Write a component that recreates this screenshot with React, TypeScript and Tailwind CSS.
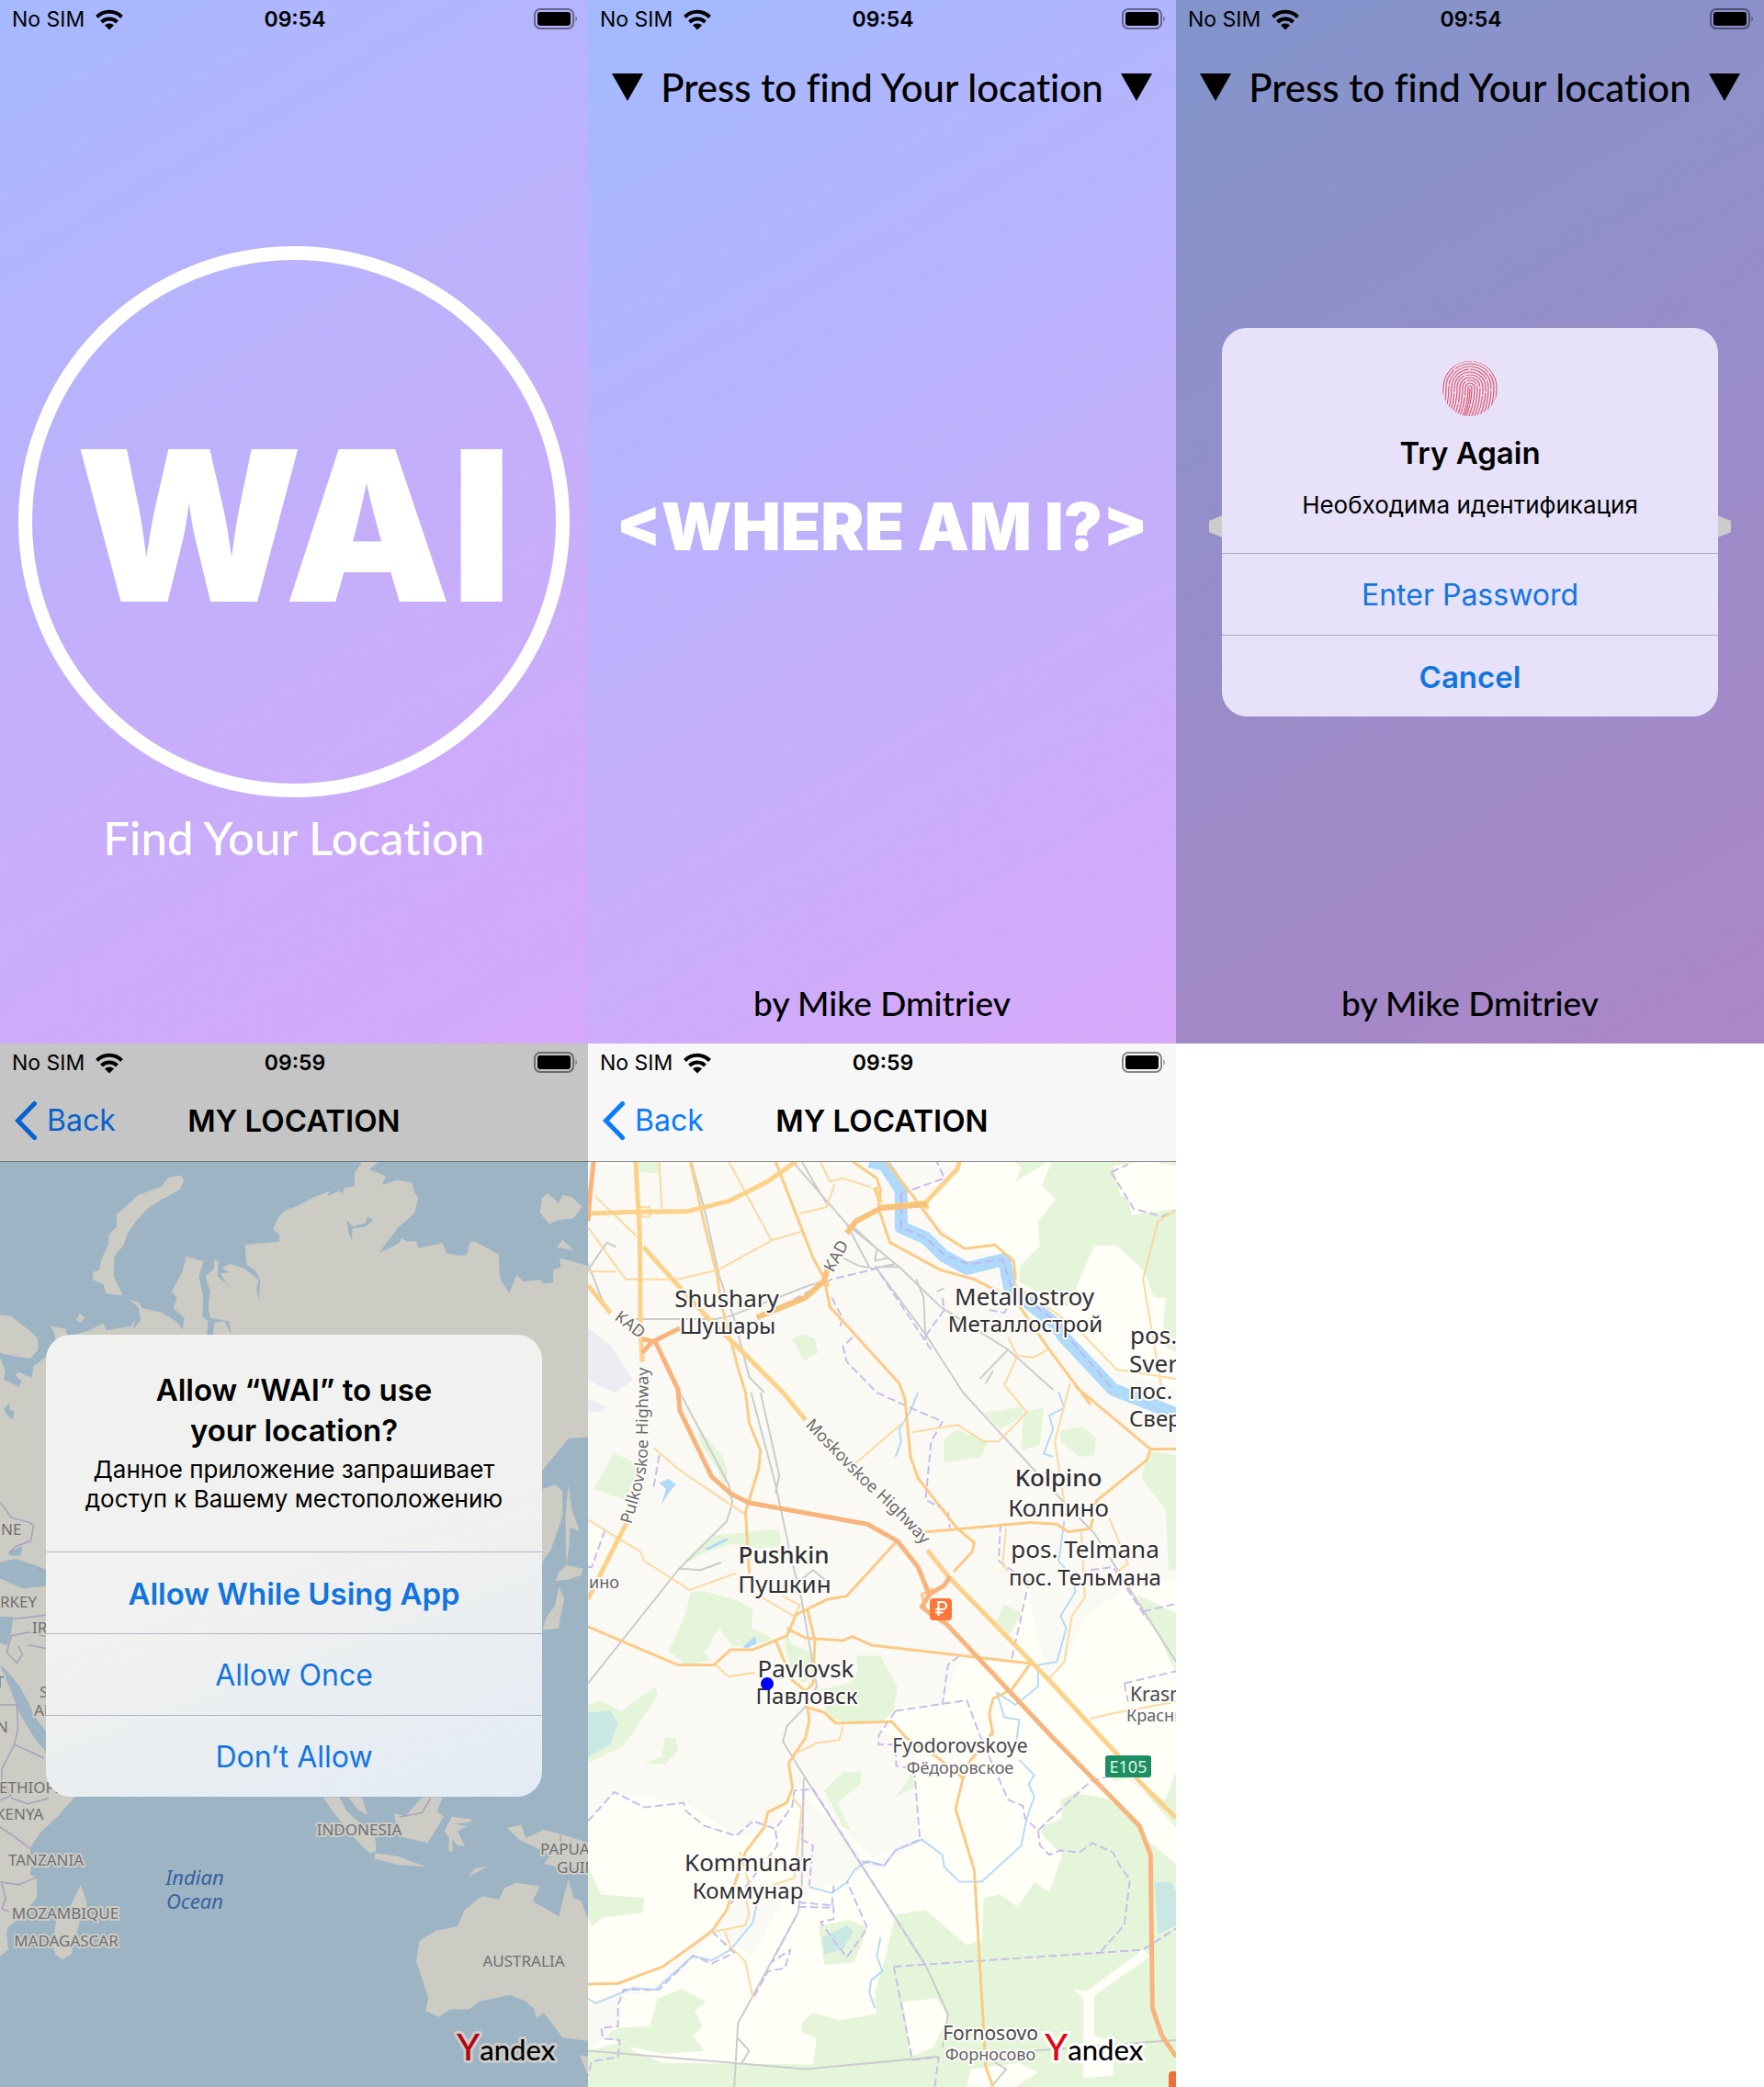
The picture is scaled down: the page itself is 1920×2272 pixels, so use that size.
import React from "react";

/* ---------- Shared phone chrome ---------- */

function WifiIcon() {
  return (
    <svg viewBox="0 0 30 23" className="h-[23px] w-[30px]" aria-label="Wi-Fi">
      <g fill="none" stroke="#000" strokeWidth="4">
        <path d="M1.5 8.5a19 19 0 0 1 27 0" />
        <path d="M6.500 14a12 12 0 0 1 17 0" />
      </g>
      <path d="M15 22.500l-5-5a7.200 7.200 0 0 1 10 0z" />
    </svg>
  );
}

function BatteryIcon() {
  return (
    <svg viewBox="0 0 48 24" className="h-6 w-12" aria-label="Battery full">
      <rect x="1" y="1" width="42" height="21" rx="6" fill="none" stroke="#000" strokeOpacity="0.45" strokeWidth="2" />
      <rect x="4" y="4" width="36" height="15" rx="3" />
      <path d="M45.500 8q2.500 3.500 0 7z" fillOpacity="0.5" />
    </svg>
  );
}

function StatusBar({ time }: { time: string }) {
  return (
    <div className="grid h-10 grid-cols-3 items-center pt-0.5 pr-[11px] pl-[13px] text-[23px] leading-6 text-black">
      <div className="flex items-center gap-3">
        <span>No SIM</span>
        <WifiIcon />
      </div>
      <time className="text-center font-semibold">{time}</time>
      <div className="flex justify-end">
        <BatteryIcon />
      </div>
    </div>
  );
}

function NavBar({ time }: { time: string }) {
  return (
    <header className="border-b border-[#8e9090] bg-[#f7f7f7]">
      <StatusBar time={time} />
      <div className="grid h-[88px] grid-cols-[1fr_auto_1fr] items-center px-[15px]">
        <button type="button" className="flex items-center gap-[10px] justify-self-start text-[32px] leading-10 text-[#0a7aff]">
          <svg viewBox="0 0 26 44" className="h-[44px] w-[26px]" fill="none" stroke="currentColor" strokeWidth="5" strokeLinecap="round" strokeLinejoin="miter">
            <path d="M22.500 3.500 4.500 22l18 18.500" />
          </svg>
          Back
        </button>
        <h2 className="text-[33px] leading-10 font-semibold text-black">MY LOCATION</h2>
        <span />
      </div>
    </header>
  );
}

function Phone({ className, label, children }: { className: string; label: string; children: React.ReactNode }) {
  return (
    <section aria-label={label} className={`relative flex aspect-[80/142] flex-col overflow-hidden ${className}`}>
      {children}
    </section>
  );
}

/* ---------- Alerts ---------- */

function Fingerprint() {
  const rings = [
    { r: 2, dash: "60 1" },
    { r: 5, dash: "26 1.5 60" },
    { r: 8, dash: "44 1.5 12 1.500 60" },
    { r: 11, dash: "18 1.5 50 1.500 60" },
    { r: 14, dash: "52 1.5 34 1.500 60" },
    { r: 17, dash: "30 1.5 62 1.500 60" },
    { r: 20, dash: "66 1.5 22 1.500 60" },
    { r: 23, dash: "38 1.5 70 1.500 60" },
    { r: 26, dash: "58 1.5 40 1.500 60" },
    { r: 29, dash: "84 1.5 60" },
  ];
  return (
    <svg viewBox="0 0 60 60" className="size-[60px]" aria-hidden="true">
      <clipPath id="finger-clip">
        <circle cx="30" cy="30" r="30" />
      </clipPath>
      <g clipPath="url(#finger-clip)" fill="none" stroke="#e0566a" strokeWidth="1.200">
        {rings.map(({ r, dash }) => (
          <path key={r} strokeDasharray={dash} d={`M${22 - r} 64Q${30 - r} 48 ${30 - r} 29A${r} ${r} 0 0 1 ${30 + r} 29Q${30 + r} 48 ${22 + r} 64`} />
        ))}
        <path d="M30 30Q30 48 22 64" />
      </g>
    </svg>
  );
}

function AlertButton({ children, bold = false }: { children: React.ReactNode; bold?: boolean }) {
  return (
    <button
      type="button"
      className={`h-[89px] w-full border-t border-[#5a5a8266] pt-0.5 leading-10 text-[#1275df] ${bold ? "text-[33px] font-semibold" : "text-[32px] font-normal"}`}
    >
      {children}
    </button>
  );
}

function Alert({ className, label, children }: { className: string; label: string; children: React.ReactNode }) {
  return (
    <div className="absolute inset-0 flex items-center bg-black/20 px-[50px]">
      <div role="alertdialog" aria-label={label} className={`w-full overflow-hidden rounded-[27px] text-center text-black ${className}`}>
        {children}
      </div>
    </div>
  );
}

/* ---------- Start screens ---------- */

function SplashScreen() {
  return (
    <Phone label="Splash" className="bg-linear-150 from-[#a6b9ff] via-[#c3affb] to-[#d5a8fa]">
      <StatusBar time="09:54" />
      <div className="flex flex-1 flex-col items-center px-5 pt-[228px]">
        <h1 className="flex aspect-square w-full items-center justify-center rounded-full border-[15px] border-white pt-2 text-[228px] leading-none font-black text-white">
          WAI
        </h1>
        <p className="mt-[14px] font-[Lato] text-[51px] leading-[60px] font-medium text-white [font-variant-ligatures:none]">Find Your Location</p>
      </div>
    </Phone>
  );
}

function WelcomeContent() {
  return (
    <>
      <StatusBar time="09:54" />
      <button type="button" className="flex h-[109px] items-center justify-between px-[26px] font-[Lato] text-[42px] leading-[50px] font-medium text-black [font-variant-ligatures:none]">
        <svg viewBox="0 0 34 30" className="h-[30px] w-[34px]" aria-hidden="true">
          <path d="M0 0h34L17 30z" />
        </svg>
        Press to find Your location
        <svg viewBox="0 0 34 30" className="h-[30px] w-[34px]" aria-hidden="true">
          <path d="M0 0h34L17 30z" />
        </svg>
      </button>
      <h1 className="flex flex-1 items-center justify-center pb-[68px] text-[71px] leading-none font-black whitespace-nowrap text-white">
        {"<WHERE AM I?>"}
      </h1>
      <footer className="pb-[17px] text-center font-[Lato] text-[37px] leading-[54px] font-medium text-black">by Mike Dmitriev</footer>
    </>
  );
}

const welcomeGradient = "bg-linear-150 from-[#a2baff] via-[#bfb0fc] to-[#d8a8f9]";

/* ---------- Maps ---------- */

type LabelProps = { x: number; y: number; size?: string; tone?: string; children: React.ReactNode; anchor?: "start" | "middle" };

function MapLabel({ x, y, size = "text-[26px]", tone = "fill-[#2f3036] stroke-[#fdfbf6]", anchor = "middle", children }: LabelProps) {
  return (
    <text x={x} y={y} textAnchor={anchor} strokeWidth="4" strokeLinejoin="round" paintOrder="stroke" className={`${size} ${tone}`}>
      {children}
    </text>
  );
}

function YandexLogo({ halo }: { halo: string }) {
  return (
    <text x="497" y="1107" stroke={halo} strokeWidth="6" strokeLinejoin="round" paintOrder="stroke" className="font-[Lato] text-[31px] font-medium">
      <tspan fill="#e30613" className="text-[40px]">Y</tspan>
      <tspan fill="#000">andex</tspan>
    </text>
  );
}

const worldLand = [
  "M0 815L30 820 75 860 100 885 102 920 80 948 40 940 0 930Z",
  "M0 945L15 985 10 1010 50 1032 58 1015 40 995 50 988 85 1005 90 970 125 940 150 905 145 870 133 848 175 858 180 880 240 862 275 840 283 862 350 850 360 830 355 858 375 830 370 795 345 768 372 780 378 795 430 808 470 835 487 860 492 825 462 795 472 765 458 745 485 690 497 640 543 655 530 700 542 760 540 820 555 835 552 875 568 875 572 838 600 835 612 865 618 875 610 835 560 825 555 790 560 745 548 700 572 675 570 648 583 655 580 700 620 738 600 715 588 690 612 688 592 675 612 662 650 675 690 710 684 735 690 770 694 710 682 685 658 665 653 605 745 595 745 575 728 560 740 525 762 500 790 490 830 465 880 443 872 460 905 443 915 452 918 435 945 428 945 390 965 355 1010 355 985 378 1028 398 1020 425 1060 410 1100 420 1102 440 1115 465 1105 510 1060 555 1010 630 1065 600 1070 583 1085 596 1110 594 1115 615 1180 600 1190 630 1225 638 1245 635 1252 600 1265 595 1300 615 1330 635 1332 690 1335 710 1358 750 1378 695 1395 715 1440 710 1450 722 1475 718 1475 680 1495 672 1492 645 1568 668V1182L1515 1188 1445 1285 1300 2220H200V2264L150 2328 110 2368 80 2418 85 2468 80 2498 98 2508V2568L60 2618 20 2658 18 2678 22 2723 0 2743Z",
  "M485 397L490 415 480 438 430 470 395 495 365 530 340 570 330 605 305 640 303 700 328 758 283 752 276 725 248 710 248 686 264 682 270 650 290 600 290 575 312 550 310 515 345 480 370 455 430 430 450 402Z",
  "M1460 450L1490 480 1500 455 1525 462 1552 490 1530 525 1490 530 1465 542 1440 510 1445 465Z",
  "M1500 590L1530 622 1485 612Z",
  "M212 812L228 825 215 838 203 832Z",
  "M1445 1340L1480 1325 1500 1345 1500 1420 1470 1520 1445 1560Z",
  "M1515 1325L1525 1400 1545 1465 1520 1455 1518 1510 1510 1568 1508 1420Z",
  "M1510 1568L1555 1578 1550 1598 1515 1612 1482 1615 1490 1590Z",
  "M1490 1633L1505 1668 1495 1718 1490 1758 1447 1763 1455 1728 1480 1688Z",
  "M215 2528L232 2583 215 2628 190 2738 165 2753 148 2738 140 2708 150 2638 190 2588Z",
  "M862 2265H905L925 2308 1000 2383 1003 2428 985 2433 945 2388 890 2313Z",
  "M930 2265H965L980 2320 950 2298Z",
  "M1000 2433L1060 2443 1138 2475 1060 2468 998 2450Z",
  "M1180 2265L1165 2308 1183 2323 1165 2358 1140 2403 1065 2383 1050 2313 1080 2323 1125 2265Z",
  "M1205 2323L1260 2333 1275 2318 1250 2342 1210 2345 1245 2353 1220 2368 1240 2413 1220 2410 1205 2390 1208 2428 1196 2428 1198 2388 1185 2368Z",
  "M1250 2505L1265 2480 1300 2474Z",
  "M1352 2358L1390 2348 1402 2388 1450 2363 1500 2378 1568 2403V2478L1500 2480 1450 2465 1470 2440 1425 2415 1385 2393Z",
  "M1375 2523L1440 2533 1420 2578 1490 2623 1515 2513 1530 2568 1550 2578 1568 2633V2998L1500 2988 1450 2913 1430 2930 1425 2903 1400 2878 1360 2860 1280 2878 1250 2903 1200 2903 1170 2926 1135 2908 1142 2868 1110 2758 1118 2698 1160 2668 1220 2653 1240 2603 1285 2563 1330 2573 1345 2538Z",
  "M1545 3040L1568 3045V3100Z",
];

const worldWater = [
  "M925 530L940 550 975 540 980 520 995 530 975 550 940 556 938 590 930 570Z",
  "M25 1080L26 1100 38 1105 35 1130 22 1120 10 1100Z",
  "M20 1530L60 1510 55 1540 30 1540ZM0 1560L40 1548 122 1580V1630L60 1638 0 1608Z",
  "M0 1723H35L30 1768 20 1808 0 1803Z",
  "M0 1868L20 1888 50 1928 75 1978 90 2018 122 2068V2128L95 2093 70 2048 50 2008 30 1948Z",
];

const worldBorders = [
  "M0 1380L15 1400 30 1425 80 1440 90 1450 82 1495 45 1510 25 1530",
  "M35 1730L122 1718M122 1782L75 1770 30 1780 18 1830M75 1808L122 1818M18 1830L45 1862 60 1835 48 1810",
  "M0 1988H45L48 2058 38 2108 60 2118 118 2148M38 2108L5 2180 5 2220 30 2260 0 2275M30 2268L75 2285 110 2275 130 2268M0 2355L40 2385 78 2418M0 2520L50 2528 98 2506M5 2525L15 2570 5 2600 25 2610",
  "M1065 2325L1125 2312 1148 2270M100 1578L122 1590M1495 2380V2410",
];

function WorldMap() {
  const tone = "fill-[#8d8d92] stroke-[#fffef6]";
  return (
    <svg viewBox="0 129 640 1007" preserveAspectRatio="xMidYMid slice" className="min-h-0 w-full flex-1 bg-[#c4e2f6] font-['Noto_Sans']" role="img" aria-label="World map">
      <g transform="scale(.4082 .3622)">
        <path d={worldLand.join("")} fill="#fffef6" />
        <path d={worldWater.join("")} fill="#c4e2f6" />
        <path d={worldBorders.join("")} fill="none" stroke="#d5c6ea" strokeWidth="1.500" vectorEffect="non-scaling-stroke" />
      </g>
      <MapLabel anchor="start" size="text-[17px]" tone={tone} x={1} y={535}>NE</MapLabel>
      <MapLabel anchor="start" size="text-[17px]" tone={tone} x={0} y={614}>RKEY</MapLabel>
      <MapLabel anchor="start" size="text-[17px]" tone={tone} x={35} y={642}>IRAN</MapLabel>
      <MapLabel anchor="start" size="text-[17px]" tone={tone} x={-5} y={701}>T</MapLabel>
      <MapLabel anchor="start" size="text-[17px]" tone={tone} x={43} y={712}>SAUDI</MapLabel>
      <MapLabel anchor="start" size="text-[17px]" tone={tone} x={37} y={732}>ARABIA</MapLabel>
      <MapLabel anchor="start" size="text-[17px]" tone={tone} x={-4} y={750}>N</MapLabel>
      <MapLabel anchor="start" size="text-[17px]" tone={tone} x={-1} y={816}>ETHIOPIA</MapLabel>
      <MapLabel anchor="start" size="text-[17px]" tone={tone} x={-5} y={845}>KENYA</MapLabel>
      <MapLabel size="text-[17px]" tone={tone} x={50} y={895}>TANZANIA</MapLabel>
      <MapLabel size="text-[17px]" tone={tone} x={71} y={953}>MOZAMBIQUE</MapLabel>
      <MapLabel size="text-[17px]" tone={tone} x={72} y={983}>MADAGASCAR</MapLabel>
      <MapLabel size="text-[17px]" tone={tone} x={391} y={862}>INDONESIA</MapLabel>
      <MapLabel anchor="start" size="text-[17px]" tone={tone} x={588} y={883}>PAPUA NEW</MapLabel>
      <MapLabel anchor="start" size="text-[17px]" tone={tone} x={606} y={903}>GUINEA</MapLabel>
      <MapLabel size="text-[17px]" tone={tone} x={570} y={1005}>AUSTRALIA</MapLabel>
      <MapLabel size="text-[22px] italic" tone="fill-[#4a79cc] stroke-[#c4e2f6]" x={212} y={916}>Indian</MapLabel>
      <MapLabel size="text-[22px] italic" tone="fill-[#4a79cc] stroke-[#c4e2f6]" x={212} y={942}>Ocean</MapLabel>
      <YandexLogo halo="#ffffff" />
    </svg>
  );
}

/* City map geometry: 1568 units wide, 3408 units tall. */
const fields = [
  "M990 385H1568V1125L1400 1065 1290 960 1150 850 1130 690 1000 670 900 540Z",
  "M1568 1750L1420 1790 1320 1880 1280 2010 1220 2060 1170 1770 1120 2010 990 2020 950 2150 820 2170 780 2240 870 2290 880 2590 820 2640 740 2680 640 2500 590 2440 570 2380 560 2700 440 2980 330 2900 280 2990 180 3100 90 3110 80 3220 0 3290V2540L70 2450 260 2480 400 2590 500 2560 540 2420 760 2660 900 2590 1000 2740 1568 2740Z",
  "M0 1570L45 1590 10 1700 0 1700ZM0 2600V3408H1568V2570H1000L870 2620 790 2680 700 2720 560 2790 440 2760 240 2980 180 3090 90 3100 0 3140Z",
];

const greens = [
  "M1140 385H1568V480L1520 440 1470 385 1420 400 1450 560 1568 540V1010L1530 980 1540 830 1510 830 1480 740 1410 660 1350 660 1280 860 1150 780 1150 730 1205 660 1200 580 1247 510 1210 465 1235 390 1225 388 1140 450 1155 405Z",
  "M135 385H190V425L135 420Z",
  "M545 965L575 948 605 965 613 1010 575 1035Z",
  "M68 1338L150 1380 115 1497 15 1455Z",
  "M295 1255L360 1350 372 1400 365 1450 345 1390 300 1310Z",
  "M255 1690L330 1605 400 1600 510 1585 515 1640 460 1650 385 1635 320 1660 270 1690Z",
  "M275 1790L310 1790 400 1820 440 1850 435 1910 495 1945 440 1965 385 1970 350 1910 310 1990 330 2015 260 2030 215 1985 255 1880Z",
  "M530 1920L545 1965 600 1990 605 2070 570 2090 540 2040 525 1965Z",
  "M715 2000H780L825 2100 815 2180 780 2220 640 2210 620 2110 700 2090 720 2050Z",
  "M950 1290L985 1262 1065 1300 1050 1350 950 1368Z",
  "M1055 1205L1100 1200 1155 1185 1160 1215 1100 1260ZM1165 1200L1215 1190 1205 1310 1155 1330 1158 1255Z",
  "M1260 1265L1320 1250 1355 1290 1350 1345 1310 1350 1260 1300Z",
  "M1495 1330L1568 1345V1720L1548 1720 1540 1520 1475 1420Z",
  "M1110 1832L1155 1860 1125 1930 1085 1895Z",
  "M1465 1800L1568 1860V2060L1520 1930 1480 1860Z",
  "M180 2100L185 2130 120 2250 90 2300 50 2320 0 2350V2160L30 2145 90 2180Z",
  "M205 2268H235L240 2310 205 2355 150 2350 195 2330Z",
  "M680 2380L730 2378 725 2420 665 2480 700 2570 680 2560 630 2440Z",
  "M870 2365L870 2430 820 2460 850 2410Z",
  "M1400 2410L1450 2400 1568 2560V2268L1568 2380 1540 2470 1480 2440 1440 2400 1398 2380ZM0 2690L35 2780 150 2790 145 2840 40 2855 10 2885 0 2850Z",
  "M1260 2470L1300 2448 1380 2465 1450 2520 1480 2590 1568 2680V3408H0V3290L100 3260 120 3290 200 3330 600 3335 610 3250 570 3230 570 3200 600 3165 670 3190 770 3170 765 3100 790 3000 820 2845 900 2830 1010 2945 1050 2930 1055 2790 1100 2780 1145 2820 1190 2740 1230 2770 1265 2650 1215 2590 1205 2560 1265 2530Z",
  "M250 3088L315 3130 285 3160 305 3210 280 3240 310 3290 200 3300 90 3270 50 3240 80 3215 165 3210 185 3120Z",
  "M615 2880L700 2862 745 2890 710 3000 630 3010Z",
];

const clearings = [
  "M1480 490L1568 540V400L1500 385 1400 400 1420 500Z",
  "M840 3130L930 3118 960 3180 920 3280 860 3310Z",
  "M1295 3090L1330 3095 1480 2960 1500 2980 1350 3110 1350 3240 1400 3260V3370L1320 3380V3120Z",
  "M1020 3350L1150 3330 1200 3360 1140 3408H1010Z",
  "M1450 2500L1500 2580 1568 2630V2680L1520 2600 1450 2520Z",
];

const townAreas = ["M0 930L60 985 120 1100 70 1140 0 1100Z", "M0 1160L50 1185 30 1205 0 1200Z"];

const ponds = [
  "M0 2185L60 2180 80 2220 60 2290 0 2330Z",
  "M625 2920L690 2880 708 2900 680 2960 630 2975Z",
  "M1510 2740L1555 2740 1568 2770V2880L1520 2910Z",
];

const lakes = ["M190 1435L215 1422 235 1440 220 1460 195 1508 208 1455ZM310 1650L370 1615 375 1622 320 1655ZM412 1972L445 1935 450 1960 425 1975Z"];

const streams = [
  "M1255 1140L1270 1190 1230 1215 1240 1260 1215 1340 1240 1350",
  "M880 1140L860 1200 830 1260 835 1300 820 1350",
  "M1270 1560L1255 1690 1290 1740 1300 1790 1260 1870 1275 1910 1250 2020 1200 2030 1200 2100 1140 2160 1090 2120 1110 2200 1150 2210 1140 2300",
  "M1150 2340L1190 2390 1175 2420 1190 2460 1170 2530 1155 2620 1050 2738H990L950 2690 945 2650 890 2600 820 2635 790 2685 745 2670 710 2700 690 2740 650 2775 590 2755",
  "M0 3120L20 3135 120 3085 180 3090 280 2980 330 2995 380 2960 440 2870 450 2810",
  "M780 2920L770 2980 785 3030 755 3060 750 3100 765 3150",
];

const boundaries = [
  "M835 490L950 440 930 385",
  "M520 855L650 770 770 735 915 1000",
  "M650 830L680 900 670 930",
  "M705 960L680 990 690 1040 770 1140 860 1190 945 1235 915 1300 900 1490 960 1530 965 1585",
  "M1395 420L1440 395M1395 420L1455 540 1530 565 1568 545",
  "M900 955L950 870 945 830M1070 870L1110 880 1130 840",
  "M190 1345L175 1450M45 1590L10 1710 0 1710",
  "M1100 1570L1095 1690 1175 1760 1130 2010M1340 1720L1400 1710 1490 1880",
  "M1480 1855L1568 1830M1430 2090L1568 2050M1430 2090L1440 2150",
  "M990 2000L960 2030 945 2160M820 2180L1010 2145 1045 2260 1120 2470 1160 2490 1165 2530 1200 2570 1340 2410 1400 2390",
  "M820 2180L775 2260 775 2290 820 2290 822 2360 870 2370 885 2600 820 2635 790 2685 730 2672",
  "M1200 2570L1205 2620 1230 2650 1260 2635 1310 2642 1345 2612 1400 2642 1420 2690 1445 2730 1430 2880 1360 2975",
  "M815 3015L1480 2960 1568 2890M815 3015L865 3320 935 3310 925 3408",
  "M0 2540L70 2445 150 2495 255 2480 260 2505 310 2555 395 2588 440 2540 500 2565 545 2490 550 2440 600 2435 900 3010",
  "M575 2440L570 2600 600 2620 590 2750M500 2570L505 2620 430 2740 380 2810",
  "M560 2805L650 2815M560 2820L650 2822 655 2750M655 2815L655 2860 620 2870 690 2985 745 2890 690 2735",
  "M330 2900L390 2970 330 3005 280 2980 190 3090 95 3090 80 3140 80 3210 35 3215 40 3250 85 3255 80 3310 10 3325 0 3370",
  "M555 2850L490 3000 540 2960 525 3020 480 3030 440 3120",
];

const rails = [
  "M275 385L310 540 350 760 390 900 430 1090 470 1140",
  "M545 385L690 590 750 730M570 385L605 460 640 530M690 590L830 730 940 860 1120 1000 1240 1130",
  "M680 700L720 725 760 735 820 720M700 590L770 670 765 710 800 700M765 730L830 730M635 775L590 790 380 890 340 900H120",
  "M770 735L900 950 1000 1140 1270 1500 1350 1600 1568 2020",
  "M875 770L895 830 900 970M930 810L950 800M1120 1000L1045 1095M1080 1070L1060 1110",
  "M0 740L50 650 75 665M0 720L45 860",
  "M245 1140L375 1440 385 1500 370 1560 240 1720 0 2090",
  "M435 1140L500 1440 540 1670 570 1820 610 2100 585 2160 530 2230 520 2280 580 2400 900 3010 960 3170 945 3280",
  "M460 1140L510 1410 500 1470M240 1715L300 1720 355 1695M570 1750L600 1720 640 1760",
  "M575 2400L570 2750 560 2840 400 3200 390 3408M0 3290L580 3350 930 3310M400 3250L430 3290 410 3330M1050 3300L1115 3350 1075 3408M1190 3290L1568 3255",
];

const minorRoads = [
  "M190 385L197 540M20 500L130 630M0 600L100 770H240L350 738 490 643 575 612",
  "M135 535H165V565H135",
  "M375 385L490 645M0 745H75M620 385L645 450 680 440 755 470M658 460L635 535 565 555",
  "M1140 745V790L1300 925 1410 1065 1568 1095M1120 960L1145 1020 1190 1025 1225 1000M1145 1020L1110 1115 1170 1205 1095 1300 1055 1300 985 1245 865 1270",
  "M838 1240L710 1375M1285 1110L1245 1300 1270 1500M1480 770L1520 580 1568 545M1480 770L1530 1130",
  "M175 1320L240 1390 415 1535M0 1555L140 1660 150 1690 270 1785 395 1730",
  "M340 2030L375 2068 445 2055M465 1810L550 1870 565 1835 520 1805M405 2640L430 2750M490 2750L550 2725 570 2500 545 2460",
  "M340 2900L420 2880 430 2840 420 2790M365 2900L380 2950 420 3000 440 3120M560 2315L610 2285 670 2275 680 2230",
  "M1115 1585L1105 1700 1120 1725M1390 1550L1440 1700 1410 1725M1340 2205L1390 2190 1568 2150M1315 1595L1325 1810 1290 1870 1270 2020 1225 2080",
];

const midRoads = [
  "M500 385L600 700 640 790 630 770",
  "M630 770L645 860 830 1110 845 1160 860 1350 880 1420 985 1585 1030 1630 1025 1660 975 1725",
  "M705 385L770 440 780 480 775 540 805 650 940 740 1030 770 1140 840 1230 1000 1340 1180",
  "M795 385L880 520 940 620 1005 670 1085 658 1135 710 1140 770",
  "M1300 1120L1500 1325 1490 1360 1355 1495 1340 1585 1280 1595 1250 1570 1180 1565 885 1597",
  "M1500 1325H1568M400 1060L420 1140 430 1240 460 1330 455 1390 420 1530 430 1730",
  "M820 1630L690 1805 640 1815 555 1865 530 1935 500 1950 440 1980 380 1980 335 2030 240 2030 0 1905",
  "M500 1950L545 2080 580 2115 600 2090 605 1950 585 1850M530 1910L580 1942 680 1950 705 1937 755 1965 1180 2025 1130 2110 1080 2140 1070 2190 1080 2260",
  "M580 2115L590 2210 580 2268 535 2350 545 2430 530 2480 480 2510 470 2560 420 2640 395 2730 370 2830 330 2900 200 3015 80 3070 0 3072",
  "M590 2170L630 2185 660 2220 810 2215 850 2270 930 2330 1000 2400 980 2500 1030 2700 1055 3220 1060 3340 1080 3408",
  "M1000 2400L1020 2340 1060 2290 1080 2240M920 1780L890 1800 900 1850",
];

const majorRoads = [
  "M127 385L138 620 140 940 145 1040M148 665L240 790 330 910 390 980 520 1140 580 1230",
  "M0 555L135 550 265 548 375 515 480 450 555 385",
  "M990 385L985 410 900 520 905 540M780 535L900 520M765 470L780 520",
  "M0 790L60 880M0 1815L80 1620 110 1550M905 1655L960 1740 1230 2080 1370 2268M1370 2268L1410 2320 1470 2410 1568 2530",
];

const highways = [
  "M15 385L5 500 0 580M145 965L180 975 240 1130 245 1200 330 1415 380 1470 430 1500 745 1570 825 1625 880 1710 910 1800 890 1840 910 1860 955 1895 1240 2268 1470 2555 1500 2650 1505 3150 1530 3240 1568 3310",
  "M965 1740L950 1770 910 1800M145 1010L170 975 245 930",
];

function Strokes({ paths, color, width, dash }: { paths: string[]; color: string; width: number; dash?: string }) {
  return (
    <path
      d={paths.join("")}
      fill="none"
      stroke={color}
      strokeWidth={width}
      strokeDasharray={dash}
      strokeLinejoin="round"
      vectorEffect="non-scaling-stroke"
    />
  );
}

function CityMap() {
  const grey = "fill-[#63656b] stroke-[#fdfbf6]";
  return (
    <svg viewBox="0 129 640 1007" preserveAspectRatio="xMidYMid slice" className="min-h-0 w-full flex-1 bg-[#fbf9f4] font-['Noto_Sans']" role="img" aria-label="Map around Pavlovsk">
      <g transform="scale(.4082 .3333)">
        <path d={fields.join("")} fill="#fffff8" />
        {greens.map((d) => (
          <path key={d} d={d} fill="#e5f5d9" />
        ))}
        <path d={clearings.join("")} fill="#fffff8" />
        <path d={townAreas.join("")} fill="#eeecf3" />
        <path d={ponds.join("")} fill="#c9e8e4" />
        <path d={lakes.join("")} fill="#b0dafa" />
        <Strokes paths={["M750 385L790 395 835 480 835 600 900 635 950 695 1010 735 1110 705 1125 800 1240 910 1270 960 1400 1130 1568 1210"]} color="#b0dafa" width={14} />
        <Strokes paths={streams} color="#b4dcf5" width={2} />
        <Strokes paths={rails} color="#cbcccd" width={2} />
        <Strokes paths={boundaries} color="#cbbdec" width={2} dash="9 4" />
        <Strokes paths={["M835 490L835 600 900 635 950 690 1015 722 1105 705 1130 800 1240 900 1400 1130"]} color="#bdb4ee" width={2} dash="9 5" />
        <Strokes paths={minorRoads} color="#fcd9a0" width={2} />
        <Strokes paths={["M273 385L310 590 345 760 355 850 400 1060"]} color="#fbd08c" width={3} />
        <Strokes paths={midRoads} color="#fbcb85" width={3} />
        <Strokes paths={majorRoads} color="#fcd188" width={5} />
        <Strokes paths={["M903 525L780 538 715 580 690 620M640 730L630 775 580 830 450 895"]} color="#f9c27a" width={6} />
        <Strokes paths={highways} color="#f8b47c" width={5} />
      </g>

      <path id="kad-north" d="M267 250L292 203" fill="none" />
      <path id="kad-west" d="M28 300L73 334" fill="none" />
      <path id="pulkovskoe" d="M47 524C60 480 66 462 65 432L66 330" fill="none" />
      <path id="moskovskoe" d="M236 416L300 482Q340 516 378 562" fill="none" />
      <g strokeWidth="4" paintOrder="stroke" className="fill-[#6a6a6c] stroke-[#fdfbf6] text-[18px]">
        <text><textPath href="#kad-north">KAD</textPath></text>
        <text><textPath href="#kad-west">KAD</textPath></text>
        <text><textPath href="#pulkovskoe">Pulkovskoe Highway</textPath></text>
        <text><textPath href="#moskovskoe">Moskovskoe Highway</textPath></text>
      </g>

      <MapLabel x={151} y={287}>Shushary</MapLabel>
      <MapLabel x={152} y={316} size="text-2xl">Шушары</MapLabel>
      <MapLabel x={475} y={285}>Metallostroy</MapLabel>
      <MapLabel x={476} y={314} size="text-2xl">Металлострой</MapLabel>
      <MapLabel x={590} y={327} anchor="start">pos.</MapLabel>
      <MapLabel x={589} y={358} anchor="start">Sverdlova</MapLabel>
      <MapLabel x={589} y={387} anchor="start" size="text-2xl">пос.</MapLabel>
      <MapLabel x={589} y={417} anchor="start" size="text-2xl">Свердлова</MapLabel>
      <MapLabel x={512} y={482} size="text-[26px] font-medium">Kolpino</MapLabel>
      <MapLabel x={512} y={515}>Колпино</MapLabel>
      <MapLabel x={541} y={560}>pos. Telmana</MapLabel>
      <MapLabel x={541} y={590} size="text-2xl">пос. Тельмана</MapLabel>
      <MapLabel x={213} y={566} size="text-[26px] font-medium">Pushkin</MapLabel>
      <MapLabel x={214} y={598}>Пушкин</MapLabel>
      <MapLabel x={1} y={593} anchor="start" size="text-lg" tone={grey}>ино</MapLabel>
      <MapLabel x={237} y={690}>Pavlovsk</MapLabel>
      <MapLabel x={238} y={719} size="text-2xl">Павловск</MapLabel>
      <MapLabel x={405} y={772} size="text-[21px]" tone="fill-[#47494f] stroke-[#fdfbf6]">Fyodorovskoye</MapLabel>
      <MapLabel x={405} y={795} size="text-lg" tone={grey}>Фёдоровское</MapLabel>
      <MapLabel x={590} y={716} anchor="start" size="text-[21px]" tone="fill-[#47494f] stroke-[#fdfbf6]">Krasny Bor</MapLabel>
      <MapLabel x={586} y={738} anchor="start" size="text-lg" tone={grey}>Красный Бор</MapLabel>
      <MapLabel x={174} y={901}>Kommunar</MapLabel>
      <MapLabel x={174} y={931} size="text-2xl">Коммунар</MapLabel>
      <MapLabel x={438} y={1085} size="text-[21px]" tone="fill-[#47494f] stroke-[#fdfbf6]">Fornosovo</MapLabel>
      <MapLabel x={438} y={1107} size="text-lg" tone={grey}>Форносово</MapLabel>

      <rect x="563" y="775" width="50" height="24" rx="3" fill="#1c8f62" />
      <text x="588" y="794" textAnchor="middle" className="fill-[#e4f4ec] text-[18px]">E105</text>
      <rect x="372" y="604" width="24" height="24" rx="4" fill="#f97838" />
      <path d="M381.500 623v-15h4.500a4 4 0 0 1 0 8h-8M378 619.500h8.500" fill="none" stroke="#fff" strokeWidth="2.200" />
      <rect x="632" y="1119" width="24" height="24" rx="4" fill="#f0703c" />
      <circle cx="195" cy="697" r="7" fill="#0000fa" />
      <YandexLogo halo="#ffffff" />
    </svg>
  );
}

/* ---------- Page ---------- */

export default function App() {
  return (
    <main className="grid grid-cols-3 bg-white font-[Inter]">
      <SplashScreen />

      <Phone label="Welcome" className={welcomeGradient}>
        <WelcomeContent />
      </Phone>

      <Phone label="Identification" className={welcomeGradient}>
        <WelcomeContent />
        <Alert label="Try Again" className="bg-[#e7e2f9]">
          <div className="flex flex-col items-center pt-9 pb-9">
            <Fingerprint />
            <h2 className="mt-[18px] text-[33px] leading-[44px] font-semibold">Try Again</h2>
            <p className="mt-[19px] text-[26px] leading-8">Необходима идентификация</p>
          </div>
          <AlertButton>Enter Password</AlertButton>
          <AlertButton bold>Cancel</AlertButton>
        </Alert>
      </Phone>

      <Phone label="Location permission" className="bg-[#c4e2f6]">
        <NavBar time="09:59" />
        <WorldMap />
        <Alert label="Allow “WAI” to use your location?" className="bg-linear-160 from-[#f1f1ef] from-50% to-[#e2ebf4]">
          <div className="px-8 pt-[38px] pb-[41px]">
            <h2 className="text-[33px] leading-[44px] font-semibold">
              Allow “WAI” to use
              <br />
              your location?
            </h2>
            <p className="mt-[5px] text-[26px] leading-8 whitespace-nowrap">
              Данное приложение запрашивает
              <br />
              доступ к Вашему местоположению
            </p>
          </div>
          <AlertButton bold>Allow While Using App</AlertButton>
          <AlertButton>Allow Once</AlertButton>
          <AlertButton>Don’t Allow</AlertButton>
        </Alert>
      </Phone>

      <Phone label="My location" className="bg-[#fbf9f6]">
        <NavBar time="09:59" />
        <CityMap />
      </Phone>
    </main>
  );
}
